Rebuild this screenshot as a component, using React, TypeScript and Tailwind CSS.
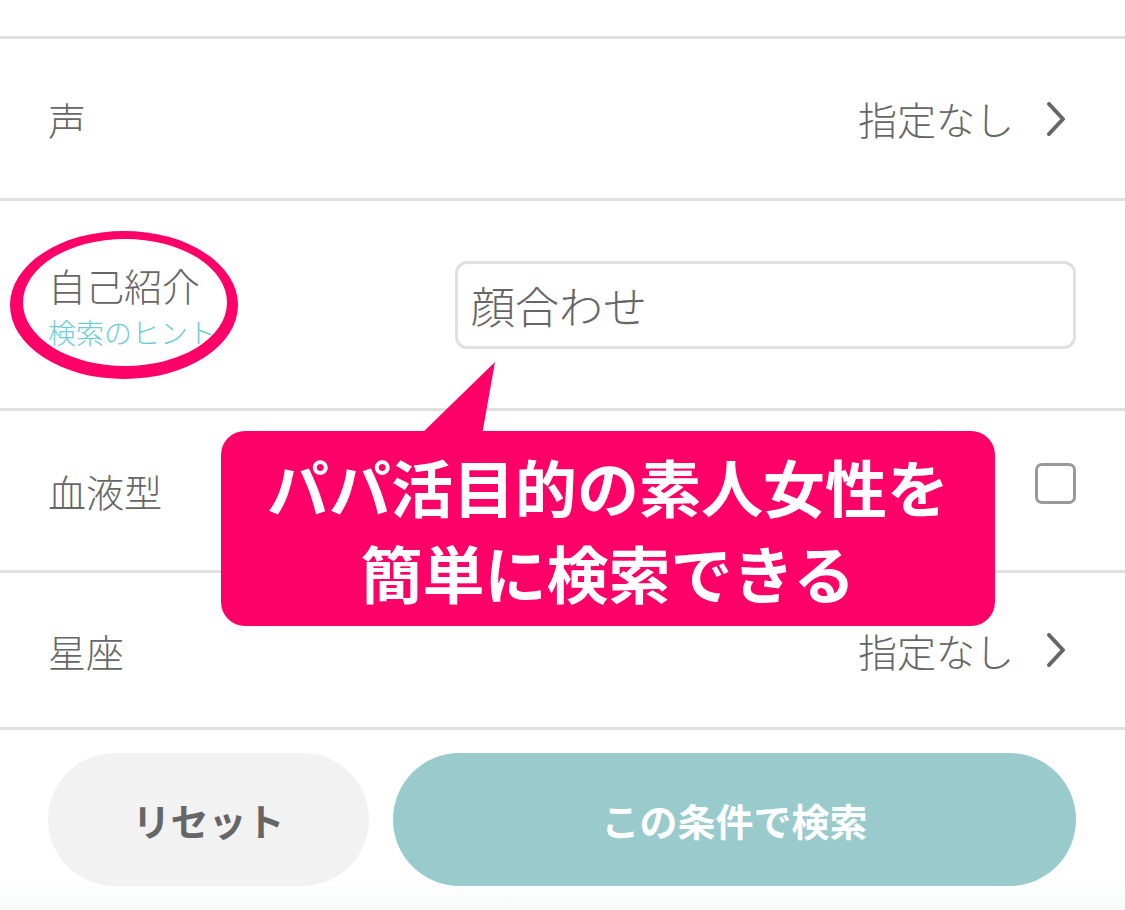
const jp = { fontFamily: '"Noto Sans CJK JP", "Noto Sans", sans-serif' };

function Chevron() {
  return (
    <svg className="ml-[33px] mr-[11px] w-[18px] h-[34px]" viewBox="0 0 18 34" fill="none">
      <polyline points="2,2 16,17 2,32" stroke="#666" strokeWidth={4} strokeLinecap="round" strokeLinejoin="round" />
    </svg>
  );
}

function SelectRow({ label, height }: { label: string; height: string }) {
  return (
    <div className={`flex items-center justify-between pl-[48px] pr-[49px] border-b-[3px] border-[#e0e0e0] ${height}`}>
      <span className="text-[38px] font-light text-[#666]">{label}</span>
      <div className="flex items-center">
        <span className="text-[39px] font-light text-[#666]">指定なし</span>
        <Chevron />
      </div>
    </div>
  );
}

export default function App() {
  return (
    <div className="relative w-[1125px] h-[910px] overflow-hidden bg-white" style={jp}>
      {/* Search condition list */}
      <div className="h-[39px] border-b-[3px] border-[#e0e0e0]" />
      <SelectRow label="声" height="h-[162px]" />

      <div className="flex items-center h-[210px] pl-[48px] pr-[49px] border-b-[3px] border-[#e0e0e0]">
        <div className="flex flex-col">
          <span className="text-[38px] leading-[50px] font-light text-[#666]">自己紹介</span>
          <span className="text-[28px] leading-[34px] mt-[5px] font-light text-[#72cdd2]">検索のヒント</span>
        </div>
        <div className="ml-auto w-[621px] h-[88px] border-[3px] border-[#e0e0e0] rounded-[12px] flex items-center pl-[13px]">
          <span className="text-[44px] font-light text-[#666]">顔合わせ</span>
        </div>
      </div>

      <div className="flex items-center justify-between h-[162px] pl-[48px] pr-[49px] border-b-[3px] border-[#e0e0e0]">
        <span className="text-[38px] font-light text-[#666]">血液型</span>
        <div className="w-[41px] h-[41px] border-[3px] border-[#999] rounded-[7px] mb-[15px]" />
      </div>

      <SelectRow label="星座" height="h-[157px]" />

      {/* Footer buttons */}
      <div className="flex gap-[24px] pl-[48px] pr-[49px] pt-[23px]">
        <button className="w-[321px] h-[133px] rounded-full bg-[#f2f2f2] text-[38px] font-bold text-[#666]">
          リセット
        </button>
        <button className="flex-1 h-[133px] rounded-full bg-[#99cbcc] text-[38px] font-bold text-white">
          この条件で検索
        </button>
      </div>
      <div className="h-[30px] bg-gradient-to-b from-[#fcfdfd] to-[#f8f9f9]" />

      {/* Annotation: ellipse */}
      <svg className="absolute left-0 top-0 w-[260px] h-[400px] pointer-events-none" viewBox="0 0 260 400">
        <path
          fillRule="evenodd"
          fill="#ff0068"
          d="M10,305 a114,74 0 1,0 228,0 a114,74 0 1,0 -228,0 Z M23,302.5 a102,63.5 0 1,0 204,0 a102,63.5 0 1,0 -204,0 Z"
        />
      </svg>

      {/* Annotation: callout */}
      <svg className="absolute left-[415px] top-[360px] w-[85px] h-[80px]" viewBox="0 0 85 80">
        <polygon points="5,75 80,2 67,75" fill="#ff0068" />
      </svg>
      <div className="absolute left-[221px] top-[431px] w-[774px] h-[195px] rounded-[24px] bg-[#ff0068] flex flex-col items-center justify-center">
        <span className="text-[62px] leading-[86px] font-bold text-white">パパ活目的の素人女性を</span>
        <span className="text-[62px] leading-[86px] font-bold text-white">簡単に検索できる</span>
      </div>
    </div>
  );
}
